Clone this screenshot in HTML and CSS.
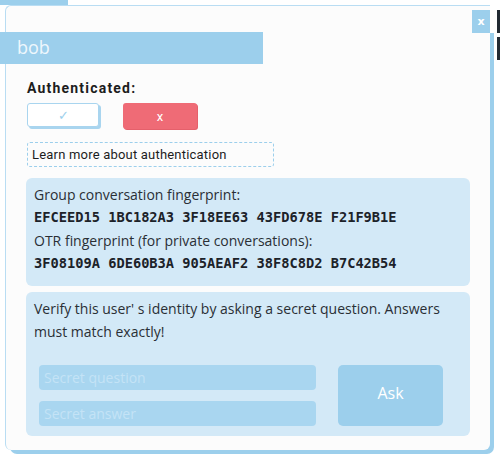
FILE: index.html
```html
<!DOCTYPE html>
<html>
<head>
<meta charset="utf-8">
<link rel="stylesheet" href="styles.css">
</head>
<body>
<div class="backdrop-tab"></div>
<div class="backdrop-edge backdrop-edge-a"></div>
<div class="backdrop-edge backdrop-edge-b"></div>
<div class="dialog">
  <div class="card">
    <button class="close">x</button>
    <div class="title">bob</div>
    <div class="body">
      <div class="auth-label">Authenticated:</div>
      <div class="auth-buttons">
        <button class="btn-yes">✓</button>
        <button class="btn-no">x</button>
      </div>
      <div class="learn">Learn more about authentication</div>
      <div class="panel fp">
        <div class="line">Group conversation fingerprint:</div>
        <div class="line mono">EFCEED15 1BC182A3 3F18EE63 43FD678E F21F9B1E</div>
        <div class="line">OTR fingerprint (for private conversations):</div>
        <div class="line mono">3F08109A 6DE60B3A 905AEAF2 38F8C8D2 B7C42B54</div>
      </div>
      <div class="panel verify">
        <div class="desc">Verify this user' s identity by asking a secret question. Answers must match exactly!</div>
        <div class="ask-row">
          <div class="fields">
            <input class="field" placeholder="Secret question">
            <input class="field" placeholder="Secret answer">
          </div>
          <button class="ask">Ask</button>
        </div>
      </div>
    </div>
  </div>
</div>
</body>
</html>
```

FILE: styles.css
```css
html, body {
  margin: 0;
  padding: 0;
  background: #ffffff;
}
body {
  width: 500px;
  height: 459px;
  position: relative;
  overflow: hidden;
  font-family: "Open Sans", "Noto Sans", sans-serif;
}
.backdrop-tab {
  position: absolute;
  left: 0;
  top: 0;
  width: 68px;
  height: 5px;
  background: #9ccfec;
}
.backdrop-edge {
  position: absolute;
  left: 497px;
  width: 3px;
  background: #222a33;
}
.backdrop-edge-a { top: 10px; height: 23px; }
.backdrop-edge-b { top: 37px; height: 23px; }

.dialog {
  position: relative;
  margin: 5px 0 0 5px;
  width: 485px;
  height: 445px;
}
.dialog::before {
  content: "";
  position: absolute;
  left: 5px;
  top: 28px;
  right: -4px;
  bottom: -4px;
  background: #9ccfec;
  border-radius: 0 0 7px 7px;
}
.card {
  position: relative;
  box-sizing: border-box;
  width: 485px;
  height: 445px;
  background: #fcfcfc;
  border-top: 1px solid #b9ddf3;
  border-left: 1px solid #b9ddf3;
  border-radius: 6px 0 6px 6px;
}
.close {
  position: absolute;
  top: 4px;
  right: 0;
  width: 18px;
  height: 23px;
  padding: 0;
  border: none;
  background: #9ccfec;
  color: #ffffff;
  font-family: "DejaVu Sans", sans-serif;
  font-weight: bold;
  font-size: 11px;
  line-height: 23px;
}
.title {
  margin: 26px 0 0 -6px;
  width: 263px;
  height: 32px;
  box-sizing: border-box;
  padding-left: 17px;
  background: #9ccfec;
  color: #eef7fd;
  font-size: 18px;
  line-height: 31px;
}
.body {
  padding: 16px 0 0 21px;
}
.auth-label {
  font-family: Roboto, sans-serif;
  font-weight: bold;
  font-size: 14px;
  letter-spacing: 1.2px;
  color: #1d1d1d;
  line-height: 16px;
}
.auth-buttons {
  display: flex;
  gap: 24px;
  margin-top: 7px;
}
.auth-buttons button {
  width: 74px;
  height: 26px;
  padding: 0;
  border-radius: 3px;
  font-family: Roboto, sans-serif;
  font-size: 13px;
}
.btn-yes {
  box-sizing: border-box;
  background: #ffffff;
  border: 1px solid #a9d5ef;
  box-shadow: 2px 2px 0 #a9d5ef;
  color: #9ccfec;
  height: 24px !important;
  width: 72px !important;
}
.btn-no {
  border: none;
  background: #ef6b76;
  color: #ffffff;
  box-shadow: 1px 1px 0 #e5606b;
}
.learn {
  box-sizing: border-box;
  margin-top: 13px;
  width: 247px;
  height: 25px;
  padding-left: 4px;
  border: 1px dashed #9ccfec;
  border-radius: 3px;
  font-family: Roboto, sans-serif;
  font-size: 13px;
  letter-spacing: 0.2px;
  line-height: 23px;
  color: #1d1d1d;
}
.panel {
  margin-left: -1px;
  width: 444px;
  box-sizing: border-box;
  background: #d3e9f7;
  border-radius: 6px;
  padding: 5px 8px 0 8px;
  color: #2a2f35;
  font-size: 14px;
  line-height: 23px;
}
.fp {
  margin-top: 11px;
  height: 108px;
}
.mono {
  font-family: "DejaVu Sans Mono", monospace;
  font-weight: bold;
  font-size: 13.7px;
  color: #1c2229;
}
.verify {
  margin-top: 6px;
  height: 144px;
}
.ask-row {
  display: flex;
  gap: 22px;
  margin: 22px 0 0 5px;
}
.fields {
  display: flex;
  flex-direction: column;
  gap: 11px;
}
.field {
  box-sizing: border-box;
  width: 277px;
  height: 25px;
  border: none;
  border-radius: 4px;
  background: #a9d6f0;
  padding: 0 5px;
  font-family: "Open Sans", sans-serif;
  font-size: 14px;
  color: #ffffff;
  outline: none;
}
.field::placeholder {
  color: #c4e3f6;
}
.ask {
  width: 105px;
  height: 61px;
  border: none;
  border-radius: 5px;
  background: #9ccfec;
  color: #ffffff;
  font-family: "Open Sans", sans-serif;
  font-size: 16px;
  padding: 0 0 5px 0;
}
```
